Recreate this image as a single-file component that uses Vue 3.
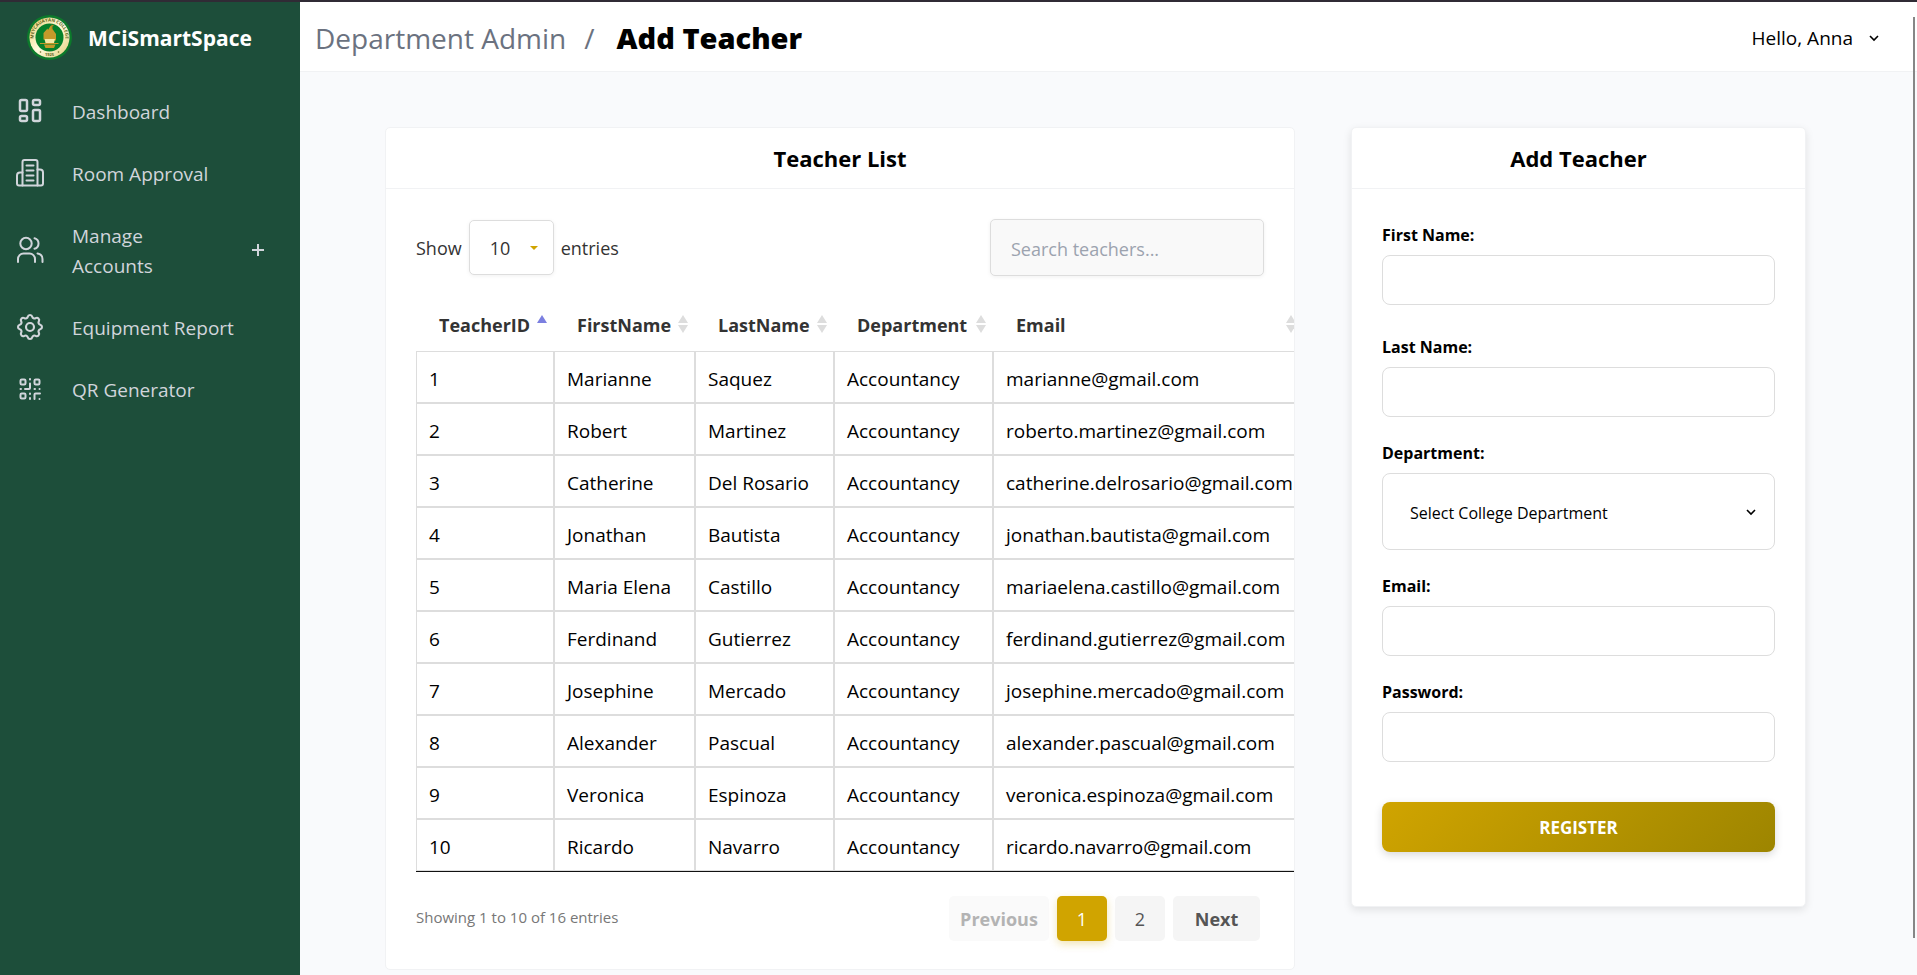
<script setup>
import { ref } from 'vue'

const navItems = [
  { label: 'Dashboard', icon: 'dashboard' },
  { label: 'Room Approval', icon: 'room' },
  { label: 'Manage Accounts', icon: 'users', expandable: true },
  { label: 'Equipment Report', icon: 'gear' },
  { label: 'QR Generator', icon: 'qr' },
]

const columns = [
  { key: 'id', label: 'TeacherID', sorted: true },
  { key: 'first', label: 'FirstName' },
  { key: 'last', label: 'LastName' },
  { key: 'dept', label: 'Department' },
  { key: 'email', label: 'Email' },
]

const teachers = [
  ['Marianne', 'Saquez', 'marianne@gmail.com'],
  ['Robert', 'Martinez', 'roberto.martinez@gmail.com'],
  ['Catherine', 'Del Rosario', 'catherine.delrosario@gmail.com'],
  ['Jonathan', 'Bautista', 'jonathan.bautista@gmail.com'],
  ['Maria Elena', 'Castillo', 'mariaelena.castillo@gmail.com'],
  ['Ferdinand', 'Gutierrez', 'ferdinand.gutierrez@gmail.com'],
  ['Josephine', 'Mercado', 'josephine.mercado@gmail.com'],
  ['Alexander', 'Pascual', 'alexander.pascual@gmail.com'],
  ['Veronica', 'Espinoza', 'veronica.espinoza@gmail.com'],
  ['Ricardo', 'Navarro', 'ricardo.navarro@gmail.com'],
].map(([first, last, email], i) => ({ id: i + 1, first, last, dept: 'Accountancy', email }))

const pageSize = ref('10')
const search = ref('')
const form = ref({ first: '', last: '', dept: '', email: '', password: '' })
</script>

<template>
  <div class="shell">
    <aside class="sidebar">
      <div class="brand">
        <svg class="logo" viewBox="0 0 90 90" aria-hidden="true">
          <defs>
            <path id="ring-top" d="M17.2 60.7A32 32 0 1 1 72.8 60.7" />
            <linearGradient id="gold" x1="0" y1="0" x2="1" y2="1">
              <stop offset="0" stop-color="#e9cf6a" />
              <stop offset=".5" stop-color="#fffbe0" />
              <stop offset="1" stop-color="#e3cd78" />
            </linearGradient>
          </defs>
          <circle cx="45" cy="45" r="45" fill="#0c7a2b" />
          <circle cx="45" cy="45" r="40" fill="url(#gold)" />
          <circle cx="45" cy="45" r="28" fill="#07802b" />
          <text class="ring-text"><textPath href="#ring-top" startOffset="50%" text-anchor="middle">MEYCAUAYAN COLLEGE</textPath></text>
          <text class="ring-year" x="45" y="81" text-anchor="middle">1925</text>
          <circle cx="27" cy="74" r="1.6" fill="#6b6a1c" />
          <circle cx="63" cy="74" r="1.6" fill="#6b6a1c" />
          <path d="M33 49V36l8-9 1 3 5-8 3-1 0 6 3 4 5 7v13z" fill="#c49a2a" />
          <path d="M49 27v-8l5 2-3 2v8z" fill="#b3831d" />
          <path d="M35 48h21l-2 8H37z" fill="#f4eaa6" />
          <path d="M26 56h37v2H26zM34 59h23l-3 7H37z" fill="#c49a2a" />
        </svg>
        <span class="brand-name">MCiSmartSpace</span>
      </div>
      <nav class="nav">
        <component
          :is="item.expandable ? 'button' : 'a'"
          v-for="item in navItems"
          :key="item.label"
          class="nav-item"
          :href="item.expandable ? null : '#'"
          :type="item.expandable ? 'button' : null"
        >
          <svg v-if="item.icon === 'dashboard'" class="nav-icon bold" viewBox="0 0 28 28" aria-hidden="true">
            <rect x="4" y="3" width="7" height="11" rx="1.5" />
            <rect x="4" y="19" width="7" height="5" rx="1.5" />
            <rect x="17" y="3" width="7" height="5" rx="1.5" />
            <rect x="17" y="13" width="7" height="11" rx="1.5" />
          </svg>
          <svg v-else-if="item.icon === 'room'" class="nav-icon" viewBox="0 0 28 28" aria-hidden="true">
            <path d="M6.5 26.5V3a2 2 0 0 1 2-2h11a2 2 0 0 1 2 2v23.5" />
            <path d="M6.5 13.5H4a3 3 0 0 0-3 3v8a2 2 0 0 0 2 2h22a2 2 0 0 0 2-2v-11a3 3 0 0 0-3-3h-2.5" />
            <path d="M10.5 6.5h7M10.5 11.5h7M10.5 16.5h7M10.5 21.5h7" />
          </svg>
          <svg v-else-if="item.icon === 'users'" class="nav-icon" viewBox="0 0 28 28" aria-hidden="true">
            <circle cx="10" cy="7.5" r="5.7" />
            <path d="M2 26v-3a5.500 5.500 0 0 1 5.500-5.500h6a5.500 5.500 0 0 1 5.500 5.500v3" />
            <path d="M18.5 2.200a5.500 5.500 0 0 1 0 10.600M21.500 17.500c3 .5 5 2.500 5 5.500v3" />
          </svg>
          <svg v-else-if="item.icon === 'gear'" class="nav-icon" viewBox="1.5 1.5 21 21" aria-hidden="true">
            <g class="fine">
              <path d="M10.325 4.317c.426-1.756 2.924-1.756 3.350 0a1.724 1.724 0 0 0 2.573 1.066c1.543-.94 3.310.826 2.370 2.370a1.724 1.724 0 0 0 1.065 2.572c1.756.426 1.756 2.924 0 3.350a1.724 1.724 0 0 0-1.066 2.573c.94 1.543-.826 3.310-2.370 2.370a1.724 1.724 0 0 0-2.572 1.065c-.426 1.756-2.924 1.756-3.350 0a1.724 1.724 0 0 0-2.573-1.066c-1.543.94-3.310-.826-2.370-2.370a1.724 1.724 0 0 0-1.065-2.572c-1.756-.426-1.756-2.924 0-3.350a1.724 1.724 0 0 0 1.066-2.573c-.94-1.543.826-3.310 2.370-2.370 1 .608 2.296.070 2.572-1.065z" />
              <circle cx="12" cy="12" r="3" />
            </g>
          </svg>
          <svg v-else class="nav-icon" viewBox="0 0 28 28" aria-hidden="true">
            <rect x="4.5" y="4.5" width="5" height="5" rx="1.2" />
            <rect x="18.5" y="4.5" width="5" height="5" rx="1.2" />
            <rect x="4.5" y="18.5" width="5" height="5" rx="1.2" />
            <path d="M14 4v.5M14 8.500v4.500a1 1 0 0 1-1 1H9M4.500 14h.5M18.500 14h.5M23.500 14h.1M14 18.500v.5M14 23v1M18.500 24v-4.500a1 1 0 0 1 1-1h4.500M23.500 24v.1" />
          </svg>
          <span class="nav-label">{{ item.label }}</span>
          <svg v-if="item.expandable" class="nav-plus" viewBox="0 0 14 14" aria-hidden="true">
            <path d="M7 1v12M1 7h12" />
          </svg>
        </component>
      </nav>
    </aside>

    <div class="page">
      <header class="topbar">
        <nav class="crumbs" aria-label="Breadcrumb">
          <a href="#">Department Admin</a>
          <span>/</span>
          <h1>Add Teacher</h1>
        </nav>
        <button type="button" class="account">
          Hello, Anna
          <svg class="chevron" viewBox="0 0 10 10" aria-hidden="true"><path d="M1 3l4 4 4-4" /></svg>
        </button>
      </header>

      <main class="content">
        <section class="card list-card">
          <h2 class="card-title">Teacher List</h2>
          <div class="list-body">
            <div class="tools">
              <label class="length">
                Show
                <span class="picker">
                  <select v-model="pageSize">
                    <option>10</option>
                    <option>25</option>
                    <option>50</option>
                  </select>
                  <svg class="caret" viewBox="0 0 8 4" aria-hidden="true"><path d="M0 0h8L4 4z" /></svg>
                </span>
                entries
              </label>
              <input v-model="search" class="search" type="search" placeholder="Search teachers..." aria-label="Search teachers" />
            </div>

            <table class="grid">
              <colgroup>
                <col v-for="c in columns" :key="c.key" :class="'col-' + c.key" />
              </colgroup>
              <thead>
                <tr>
                  <th v-for="c in columns" :key="c.key" scope="col">
                    <div class="head">
                      {{ c.label }}
                      <svg class="sort" :class="{ sorted: c.sorted }" viewBox="0 0 10 18" aria-hidden="true">
                        <path d="M0 8L5 0l5 8z" />
                        <path v-if="!c.sorted" d="M0 10h10l-5 8z" />
                      </svg>
                    </div>
                  </th>
                </tr>
              </thead>
              <tbody>
                <tr v-for="t in teachers" :key="t.id">
                  <td v-for="c in columns" :key="c.key">{{ t[c.key] }}</td>
                </tr>
              </tbody>
            </table>

            <div class="foot">
              <p class="info">Showing 1 to 10 of 16 entries</p>
              <div class="pager">
                <button type="button" class="step prev" disabled>Previous</button>
                <button type="button" class="num current">1</button>
                <button type="button" class="num">2</button>
                <button type="button" class="step next">Next</button>
              </div>
            </div>
          </div>
        </section>

        <section class="card form-card">
          <h2 class="card-title">Add Teacher</h2>
          <form class="form" @submit.prevent>
            <div class="names">
              <div class="field">
                <label for="first">First Name:</label>
                <input id="first" v-model="form.first" type="text" />
              </div>
              <div class="field">
                <label for="last">Last Name:</label>
                <input id="last" v-model="form.last" type="text" />
              </div>
            </div>
            <div class="field">
              <label for="dept">Department:</label>
              <span class="picker wide">
                <select id="dept" v-model="form.dept">
                  <option value="">Select College Department</option>
                  <option value="Accountancy">Accountancy</option>
                </select>
                <svg class="chevron" viewBox="0 0 10 10" aria-hidden="true"><path d="M1 3l4 4 4-4" /></svg>
              </span>
            </div>
            <div class="field">
              <label for="email">Email:</label>
              <input id="email" v-model="form.email" type="email" />
            </div>
            <div class="field">
              <label for="password">Password:</label>
              <input id="password" v-model="form.password" type="password" />
            </div>
            <button type="submit" class="register">REGISTER</button>
          </form>
        </section>
      </main>
    </div>
    <div class="scroll-thumb"></div>
  </div>
</template>

<style>
body {
  margin: 0;
}
</style>

<style scoped>
* {
  box-sizing: border-box;
}
.shell {
  position: relative;
  display: flex;
  min-height: 100vh;
  border-top: 2px solid #302b35;
  background: #f9fafc;
  color: #000;
  font: 18px/30px "Open Sans", "Noto Sans", sans-serif;
}
button,
input,
select {
  margin: 0;
  font: inherit;
  color: inherit;
}
button {
  border: 0;
  cursor: pointer;
}
a {
  color: inherit;
  text-decoration: none;
}
h1,
h2,
p {
  margin: 0;
}

.sidebar {
  flex: 0 0 300px;
  background: #1d4e3a;
  color: #d1d5db;
}
.brand {
  display: flex;
  align-items: center;
  gap: 16px;
  padding: 13px 27px 20px;
}
.logo {
  width: 45px;
  height: 45px;
}
.ring-text,
.ring-year {
  font-weight: 700;
  font-size: 9px;
  fill: #5d6419;
}
.ring-year {
  font-size: 8px;
}
.brand-name {
  font-size: 21px;
  font-weight: 700;
  color: #fff;
}
.nav-item {
  display: flex;
  align-items: center;
  gap: 28px;
  width: 100%;
  padding: 15px 35px 15px 16px;
  background: none;
  font-size: 19px;
  text-align: left;
}
.nav-icon {
  flex: none;
  width: 28px;
  height: 28px;
  fill: none;
  stroke: #d1d5db;
  stroke-width: 2;
  stroke-linecap: round;
  stroke-linejoin: round;
}
.bold {
  stroke-width: 2.5;
}
.fine {
  stroke-width: 1.6;
}
.nav-label {
  flex: 1;
  padding-top: 2px;
}
.nav-plus {
  width: 14px;
  height: 14px;
  margin-left: 60px;
  fill: none;
  stroke: #d1d5db;
  stroke-width: 2;
}

.page {
  flex: 1;
  min-width: 0;
}
.topbar {
  display: flex;
  align-items: center;
  justify-content: space-between;
  height: 70px;
  padding: 2px 38px 0 15px;
  border-bottom: 1px solid #f1f2f4;
  background: #fff;
}
.crumbs {
  display: flex;
  align-items: center;
  gap: 18px;
  font-size: 28px;
  color: #6b7280;
}
.crumbs h1 {
  margin-left: 4px;
  font-size: 29px;
  font-weight: 800;
  color: #000;
}
.account {
  display: flex;
  align-items: center;
  gap: 16px;
  padding: 0;
  background: none;
  font-size: 19px;
}
.chevron {
  width: 10px;
  height: 10px;
  fill: none;
  stroke: #000;
  stroke-width: 1.6;
}

.content {
  display: grid;
  grid-template-columns: minmax(0, 2fr) minmax(0, 1fr);
  align-items: start;
  gap: 56px;
  padding: 55px 111px 0 85px;
}
.card {
  overflow: hidden;
  border: 1px solid #f1f2f4;
  border-radius: 5px;
  background: #fff;
}
.form-card {
  box-shadow: 0 3px 8px rgba(0, 0, 0, 0.1);
}
.card-title {
  padding: 15px 0;
  border-bottom: 1px solid #f1f2f4;
  font-size: 22px;
  line-height: 30px;
  font-weight: 700;
  text-align: center;
}

.list-body {
  padding: 30px 30px 28px;
}
.tools {
  display: flex;
  align-items: center;
  justify-content: space-between;
  color: #333;
}
.length {
  display: flex;
  align-items: center;
  gap: 7px;
}
.picker {
  display: grid;
  align-items: center;
}
.picker > * {
  grid-area: 1 / 1;
}
.picker svg {
  justify-self: end;
  pointer-events: none;
}
.picker select {
  width: 100%;
  border: 1px solid #ddd;
  background: #fff;
  appearance: none;
}
.length select {
  width: 85px;
  height: 55px;
  padding: 0 20px;
  border-radius: 5px;
  box-shadow: 0 1px 4px rgba(0, 0, 0, 0.06);
}
.caret {
  width: 8px;
  height: 4px;
  margin-right: 16px;
  fill: #d0a400;
}
.search {
  width: 274px;
  height: 57px;
  padding: 2px 20px 0;
  border: 1px solid #ddd;
  border-radius: 5px;
  background: #f9f9f9;
  box-shadow: 0 1px 4px rgba(0, 0, 0, 0.06);
  appearance: none;
}
.search::placeholder {
  color: #9ca3af;
}

.grid {
  width: 887px;
  margin-top: 23px;
  table-layout: fixed;
  border-collapse: separate;
  border-spacing: 0;
  border-bottom: 1px solid #111;
}
.col-id {
  width: 138px;
}
.col-first {
  width: 141px;
}
.col-last {
  width: 139px;
}
.col-dept {
  width: 159px;
}
.grid th {
  height: 52px;
  padding: 0 7px 0 23px;
  text-align: left;
  font-weight: 700;
  color: #333;
}
.head {
  display: flex;
  align-items: center;
  justify-content: space-between;
}
.sort {
  flex: none;
  width: 10px;
  height: 18px;
  margin: 0 0 2px;
  fill: #ddd;
}
.sort.sorted {
  fill: #7b7fe0;
}
.grid td {
  height: 52px;
  padding: 3px 8px 0 12px;
  border: 1px solid #ddd;
  font-size: 19px;
  white-space: nowrap;
}

.foot {
  display: flex;
  align-items: flex-start;
  justify-content: space-between;
  padding: 24px 4px 0 0;
}
.info {
  padding-top: 6px;
  font-size: 15px;
  color: #777;
}
.pager {
  display: flex;
  gap: 8px;
}
.pager button {
  width: 50px;
  height: 45px;
  padding: 0;
  border-radius: 5px;
  background: #f5f5f5;
  color: #555;
}
.pager .step {
  font-weight: 700;
}
.pager .prev {
  width: 100px;
  background: #fafafa;
  color: #b3b3b3;
}
.pager .next {
  width: 87px;
}
.pager .current {
  background: #d0a400;
  color: #fff;
  box-shadow: 0 3px 8px rgba(208, 164, 0, 0.3);
}

.form {
  display: grid;
  gap: 24px;
  padding: 34px 30px 54px;
}
.names {
  display: grid;
  gap: 30px;
}
.field {
  display: grid;
  gap: 8px;
}
.field label {
  font-size: 16px;
  line-height: 24px;
  font-weight: 700;
}
.field input {
  width: 100%;
  height: 50px;
  padding: 0 16px;
  border: 1px solid #ddd;
  border-radius: 8px;
  background: #fff;
  font-size: 16px;
}
.wide select {
  height: 77px;
  padding: 2px 27px 0;
  border-radius: 8px;
  font-size: 16px;
}
.wide .chevron {
  margin-right: 19px;
}
.register {
  height: 50px;
  margin-top: 16px;
  padding: 2px 0 0;
  border-radius: 8px;
  background: linear-gradient(135deg, #d0a400, #9d8500);
  box-shadow: 0 3px 8px rgba(0, 0, 0, 0.15);
  font-size: 17px;
  font-weight: 700;
  color: #fff;
}

.scroll-thumb {
  position: absolute;
  top: 15px;
  right: 2px;
  bottom: 37px;
  width: 2px;
  background: #868686;
}
</style>
